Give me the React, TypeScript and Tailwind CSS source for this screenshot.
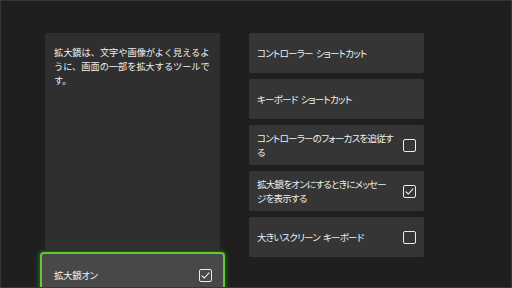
import React from "react"

const jp = "font-['Noto_Sans_CJK_JP','Noto_Sans',sans-serif]"

function Box({ checked }: { checked?: boolean }) {
  return (
    <div className="w-[13px] h-[13px] shrink-0 rounded-[2px] border-[1.5px] border-[#ececec] flex items-center justify-center">
      {checked && (
        <svg width="9" height="9" viewBox="0 0 9 9" fill="none">
          <path d="M1 4.8 L3.4 7 L8 1.8" stroke="#f2f2f2" strokeWidth="1.1" strokeLinecap="round" strokeLinejoin="round" />
        </svg>
      )}
    </div>
  )
}

// visible word gap (palt + tight tracking swallows a plain space)
const Sp = () => <span className="inline-block w-[3px]"> </span>

function Row({ children, box, checked }: { children: React.ReactNode; box?: boolean; checked?: boolean }) {
  return (
    <div className="h-[40px] rounded-[2px] bg-[#353535] pl-[8px] pr-[8px] flex items-center justify-between gap-2">
      <span className="text-[9.5px] leading-[14px] text-[#f0f0f0] whitespace-nowrap tracking-[-0.75px] [font-feature-settings:'palt']">
        {children}
      </span>
      {box && <Box checked={checked} />}
    </div>
  )
}

export default function App() {
  const rows = [
    { label: <>コントローラー<Sp />ショートカット</> },
    { label: <>キーボード<Sp />ショートカット</> },
    { label: <>コントローラーのフォーカスを追従す<br />る</>, box: true },
    { label: <>拡大鏡をオンにするときにメッセー<br />ジを表示する</>, box: true, checked: true },
    { label: <>大きいスクリーン<Sp />キーボード</>, box: true },
  ]

  return (
    <div className={`w-[512px] h-[288px] overflow-hidden bg-[#1f1f1f] border border-[#363636] ${jp}`}>
      <div className="flex gap-[29px] pl-[44px] pt-[32px]">
        {/* left column */}
        <div className="w-[175px] flex flex-col">
          <div className="h-[216px] rounded-[2px] bg-[#2f2f2f] px-[9px] pt-[12px]">
            <p className="text-[9.2px] leading-[14px] text-[#f0f0f0]">
              拡大鏡は、文字や画像がよく見えるように、画面の一部を拡大するツールです。
            </p>
          </div>
          <div className="-mx-[5px] mt-[3px] h-[46px] rounded-[4px] border-2 border-[#5fc83c] bg-[#484848] shadow-[0_0_4px_1px_rgba(70,160,40,0.55)] pl-[12px] pr-[11px] flex items-center justify-between">
            <span className="text-[9.5px] text-[#f2f2f2] tracking-[-0.4px] [font-feature-settings:'palt']">拡大鏡オン</span>
            <Box checked />
          </div>
        </div>

        {/* right column */}
        <div className="w-[175px] flex flex-col gap-[6px]">
          {rows.map((r, i) => (
            <Row key={i} box={r.box} checked={r.checked}>
              {r.label}
            </Row>
          ))}
        </div>
      </div>
    </div>
  )
}
